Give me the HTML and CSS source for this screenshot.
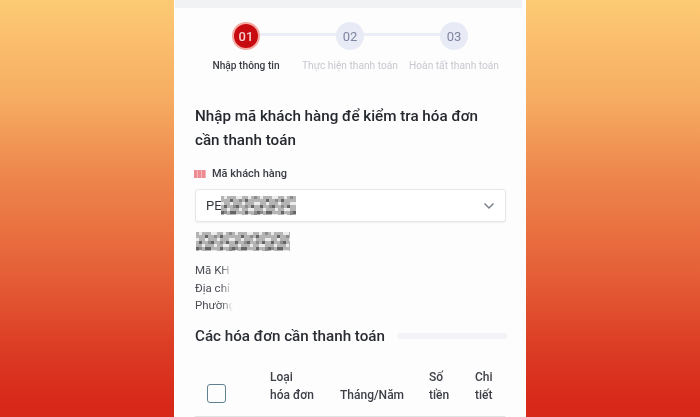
FILE: index.html
```html
<!DOCTYPE html>
<html lang="vi">
<head>
<meta charset="utf-8">
<title>Nhập thông tin</title>
<link rel="stylesheet" href="styles.css">
</head>
<body>
<svg class="defs" width="0" height="0" aria-hidden="true">
  <defs>
    <pattern id="noise" width="36" height="18" patternUnits="userSpaceOnUse">
      <rect width="36" height="18" fill="#a8a8a8"/>
      <g fill="#e9e9e9">
        <rect x="3" y="0" width="3" height="3"/><rect x="15" y="0" width="6" height="3"/><rect x="27" y="0" width="3" height="3"/>
        <rect x="0" y="6" width="3" height="3"/><rect x="9" y="6" width="3" height="3"/><rect x="21" y="6" width="3" height="3"/><rect x="33" y="6" width="3" height="3"/>
        <rect x="6" y="12" width="3" height="3"/><rect x="18" y="12" width="3" height="3"/><rect x="27" y="12" width="6" height="3"/>
        <rect x="12" y="15" width="3" height="3"/>
      </g>
      <g fill="#4c4c4c">
        <rect x="9" y="3" width="3" height="3"/><rect x="24" y="3" width="3" height="3"/>
        <rect x="3" y="9" width="3" height="3"/><rect x="15" y="9" width="3" height="3"/><rect x="30" y="9" width="3" height="3"/>
        <rect x="9" y="15" width="6" height="3"/><rect x="24" y="15" width="3" height="3"/><rect x="0" y="15" width="3" height="3"/>
      </g>
      <g fill="#7a7a7a">
        <rect x="18" y="3" width="3" height="3"/><rect x="33" y="0" width="3" height="3"/>
        <rect x="12" y="9" width="3" height="3"/><rect x="24" y="9" width="3" height="3"/>
        <rect x="3" y="15" width="3" height="3"/><rect x="33" y="15" width="3" height="3"/>
      </g>
    </pattern>
  </defs>
</svg>
<main class="phone">
  <div class="topbar"></div>
  <div class="content">
    <ol class="steps">
      <li class="step step-active"><span class="dot">01</span><span class="step-label">Nhập thông tin</span></li>
      <li class="step"><span class="dot">02</span><span class="step-label">Thực hiện thanh toán</span></li>
      <li class="step"><span class="dot">03</span><span class="step-label">Hoàn tất thanh toán</span></li>
    </ol>
    <h1 class="title">Nhập mã khách hàng để kiểm tra hóa đơn cần thanh toán</h1>
    <div class="field-label"><span class="flag"></span>Mã khách hàng</div>
    <div class="select">
      <span class="select-value">PE</span>
      <svg class="mosaic mosaic-a" width="75" height="19"><rect width="75" height="19" fill="url(#noise)"/></svg>
      <svg class="chev" width="12" height="8" viewBox="0 0 12 8"><path d="M1.5 1.5 6 6l4.5-4.5" fill="none" stroke="#7b818b" stroke-width="1.5"/></svg>
    </div>
    <svg class="mosaic mosaic-b" width="94" height="19"><rect width="94" height="19" fill="url(#noise)"/></svg>
    <div class="info">
      <div>Mã KH</div>
      <div>Địa chỉ</div>
      <div>Phường</div>
      <div class="info-mask"></div>
    </div>
    <div class="section-head"><h2>Các hóa đơn cần thanh toán</h2><span class="rule"></span></div>
    <div class="table-head">
      <span class="col col-check"><span class="checkbox"></span></span>
      <span class="col col-type">Loại<br>hóa đơn</span>
      <span class="col col-month">Tháng/Năm</span>
      <span class="col col-amount">Số<br>tiền</span>
      <span class="col col-detail">Chi<br>tiết</span>
    </div>
    <div class="table-line"></div>
  </div>
</main>
</body>
</html>
```

FILE: styles.css
```css
* { box-sizing: border-box; }
html, body { margin: 0; height: 417px; overflow: hidden; }
body {
  display: flex;
  justify-content: center;
  align-items: flex-start;
  background: linear-gradient(180deg, #fdca74 0%, #f6ac62 24%, #ee8a4e 40%, #e96f40 56%, #e35733 70%, #db3b23 84%, #d8281a 97%);
  font-family: Roboto, "Noto Sans", sans-serif;
  color: #2c2f36;
}
.defs { position: absolute; }
.phone {
  width: 352px;
  height: 417px;
  background: #fdfdfd;
  overflow: hidden;
  filter: blur(0.4px);
}
.topbar { height: 8px; margin: 0 4px 0 1px; background: #f1f2f3; }
.content { padding: 0 21px; }
.steps {
  list-style: none;
  margin: 14px 0 0 -1px;
  padding: 0;
  display: flex;
  position: relative;
  height: 50px;
}
.steps::before {
  content: "";
  position: absolute;
  left: 52px;
  width: 207px;
  top: 11px;
  height: 3px;
  background: #eceef7;
}
.step { flex: 0 0 104px; display: flex; flex-direction: column; align-items: center; position: relative; }
.dot {
  width: 28px;
  height: 28px;
  border-radius: 50%;
  background: #e8ebf6;
  color: #7d84a0;
  font-size: 13px;
  display: flex;
  align-items: center;
  justify-content: center;
}
.step-active .dot {
  width: 24px;
  height: 24px;
  margin: 2px 0;
  background: #c70a0f;
  box-shadow: 0 0 0 2px #f4a9a2;
  color: #f5cfcf;
  font-weight: 500;
}
.step-label { margin-top: 9px; font-size: 10.2px; line-height: 13px; color: #c6c8ce; white-space: nowrap; }
.step-active .step-label { color: #3a3d44; font-weight: 500; font-size: 10.2px; }
.title { margin: 32px 0 0; font-size: 15.2px; font-weight: 500; line-height: 24px; color: #25282e; max-width: 300px; }
.field-label { display: flex; align-items: center; margin-top: 14px; font-size: 11px; font-weight: 500; line-height: 16px; color: #3a3d44; }
.flag { width: 12px; height: 8px; margin: 0 6px 0 -1px; background: repeating-linear-gradient(90deg, #ee8c95 0 3px, #f7b5ba 3px 4px); }
.select {
  display: flex;
  align-items: center;
  height: 33px;
  margin-top: 7px;
  padding: 0 10px;
  background: #fff;
  border: 1px solid #e6e7ea;
  border-radius: 3px;
  box-shadow: 0 1px 2px rgba(0,0,0,.06);
  width: 311px;
  font-size: 13px;
  color: #33363c;
}
.chev { margin-left: auto; }
.mosaic { display: block; opacity: .85; filter: blur(.6px); }
.mosaic-a { flex: none; margin-left: -1px; }
.mosaic-b { margin-top: 10px; margin-left: 1px; }
.info { position: relative; margin-top: 11px; font-size: 11.5px; line-height: 17.5px; color: #4a4d54; }
.info-mask {
  position: absolute;
  left: 26px;
  top: -3px;
  width: 250px;
  height: 58px;
  background: linear-gradient(90deg, rgba(253,253,253,0) 0, #fdfdfd 12px);
}
.section-head { display: flex; align-items: center; gap: 13px; margin-top: 11px; }
.section-head h2 { margin: 0; font-size: 15.2px; font-weight: 500; line-height: 20px; color: #2a2d33; white-space: nowrap; }
.rule { flex: 1; height: 6px; margin-right: -2px; background: #f3f4f9; }
.table-head { display: flex; align-items: flex-end; margin-top: 22px; font-size: 12px; font-weight: 500; line-height: 18px; color: #3d4047; }
.col { display: block; }
.col-check { width: 75px; padding-left: 12px; }
.checkbox { display: block; width: 19px; height: 19px; margin-bottom: 1px; border: 1.5px solid #5f8190; border-radius: 3px; }
.col-type { width: 70px; }
.col-month { width: 89px; }
.col-amount { width: 46px; }
.col-detail { width: 30px; }
.table-line { height: 1px; margin-top: 12px; background: #dfe1e5; }
```
